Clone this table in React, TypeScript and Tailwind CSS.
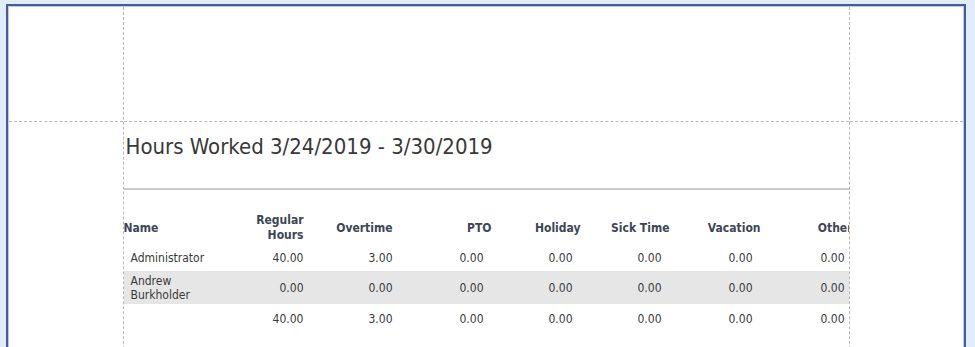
const font = "font-['DejaVu_Sans_Condensed','DejaVu_Sans',sans-serif]";

const headers = [
  { label: "Regular Hours", w: "w-[80px]" },
  { label: "Overtime", w: "w-[89px]" },
  { label: "PTO", w: "w-[99px]" },
  { label: "Holiday", w: "w-[89px]" },
  { label: "Sick Time", w: "w-[89px]" },
  { label: "Vacation", w: "w-[91px]" },
  { label: "Other", w: "w-[92px]" },
];

const rows = [
  { name: "Administrator", values: ["40.00", "3.00", "0.00", "0.00", "0.00", "0.00", "0.00"], shaded: false, h: "h-[27px]" },
  { name: "Andrew Burkholder", values: ["0.00", "0.00", "0.00", "0.00", "0.00", "0.00", "0.00"], shaded: true, h: "h-[33px]" },
  { name: "", values: ["40.00", "3.00", "0.00", "0.00", "0.00", "0.00", "0.00"], shaded: false, h: "h-[30px]" },
];

function Margin() {
  return (
    <div className="flex-1 h-full flex flex-col">
      <div className="h-[115px] border-b border-dashed border-[#b8b8b8]" />
    </div>
  );
}

export default function App() {
  return (
    <div className={`w-[975px] h-[347px] overflow-hidden bg-[#e1edfb] pl-[6px] pt-[4px] pr-[9px] ${font}`}>
      <div className="h-[400px] border-t-2 border-x-2 border-[#4a5a98]">
        <div className="h-full border-t border-x border-[#b4ccef] bg-white flex">
          <Margin />

          {/* report body */}
          <div className="w-[727px] shrink-0 h-full border-x border-dashed border-[#b8b8b8] overflow-hidden flex flex-col">
            <div className="h-[115px] border-b border-dashed border-[#b8b8b8] shrink-0" />

            <div className="pt-[11px] pl-[2px] text-[22px] leading-[27px] text-[#383838] whitespace-nowrap">
              Hours Worked 3/24/2019 - 3/30/2019
            </div>
            <div className="mt-[28px] h-[2px] bg-[#cbcbcb]" />

            <div className="mt-[22px] w-[740px] text-[12px] text-[#3a3a3a]">
              <div className="flex h-[32px] items-center font-bold text-[#3c4656]">
                <div className="w-[100px]">Name</div>
                {headers.map((h) => (
                  <div key={h.label} className={`${h.w} text-right leading-[15px] whitespace-pre-line`}>
                    {h.label === "Regular Hours" ? "Regular\nHours" : h.label}
                  </div>
                ))}
              </div>

              {rows.map((r, i) => (
                <div key={i} className={`flex items-center ${r.h} ${r.shaded ? "bg-[#e6e6e6]" : ""}`}>
                  <div className="w-[100px] pl-[7px] leading-[14px]">{r.name}</div>
                  {r.values.map((v, j) => (
                    <div key={j} className={`${headers[j].w} text-right ${j < 2 ? "pr-0" : "pr-2"}`}>
                      {v}
                    </div>
                  ))}
                </div>
              ))}
            </div>
          </div>

          <Margin />
        </div>
      </div>
    </div>
  );
}
